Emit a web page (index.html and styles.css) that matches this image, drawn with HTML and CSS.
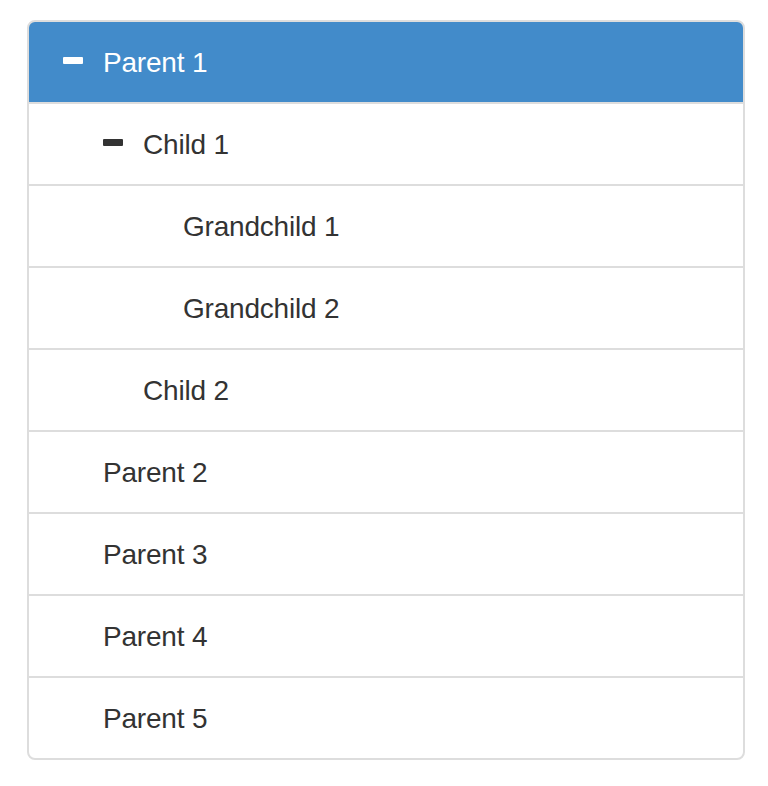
FILE: index.html
```html
<!DOCTYPE html>
<html lang="en">
<head>
<meta charset="utf-8">
<title>Tree view</title>
<link rel="stylesheet" href="styles.css">
</head>
<body>
<div class="page">
  <ul class="tree">
    <li class="node active"><span class="icon"><span class="minus"></span></span><span class="label">Parent 1</span></li>
    <li class="node"><span class="indent"></span><span class="icon"><span class="minus"></span></span><span class="label">Child 1</span></li>
    <li class="node"><span class="indent"></span><span class="indent"></span><span class="icon"></span><span class="label">Grandchild 1</span></li>
    <li class="node"><span class="indent"></span><span class="indent"></span><span class="icon"></span><span class="label">Grandchild 2</span></li>
    <li class="node"><span class="indent"></span><span class="icon"></span><span class="label">Child 2</span></li>
    <li class="node"><span class="icon"></span><span class="label">Parent 2</span></li>
    <li class="node"><span class="icon"></span><span class="label">Parent 3</span></li>
    <li class="node"><span class="icon"></span><span class="label">Parent 4</span></li>
    <li class="node"><span class="icon"></span><span class="label">Parent 5</span></li>
  </ul>
</div>
</body>
</html>
```
FILE: styles.css
```css
html, body {
  margin: 0;
  padding: 0;
  background: #ffffff;
}

body {
  font-family: "Liberation Sans", Arial, sans-serif;
  font-size: 28px;
  line-height: 40px;
  color: #333333;
}

.page {
  padding: 20px 23px 0 27px;
}

.tree {
  list-style: none;
  margin: 0;
  padding: 0;
}

.node {
  display: flex;
  align-items: center;
  padding: 20px 30px;
  margin-bottom: -2px;
  border: 2px solid #dddddd;
  background: #ffffff;
  color: #333333;
  height: 40px;
}

.node:first-child {
  border-top-left-radius: 8px;
  border-top-right-radius: 8px;
}

.node:last-child {
  margin-bottom: 0;
  border-bottom-left-radius: 8px;
  border-bottom-right-radius: 8px;
}

.node.active {
  background: #428bca;
  color: #ffffff;
}

.indent {
  flex: none;
  width: 20px;
  margin: 0 10px;
  height: 40px;
}

.icon {
  flex: none;
  width: 24px;
  height: 40px;
  margin-right: 20px;
  position: relative;
}

.minus {
  position: absolute;
  left: 4px;
  top: 15px;
  width: 20px;
  height: 7px;
  background: currentColor;
  border-radius: 1px;
}

.label {
  white-space: nowrap;
  padding-top: 2px;
  letter-spacing: -0.2px;
}
```
